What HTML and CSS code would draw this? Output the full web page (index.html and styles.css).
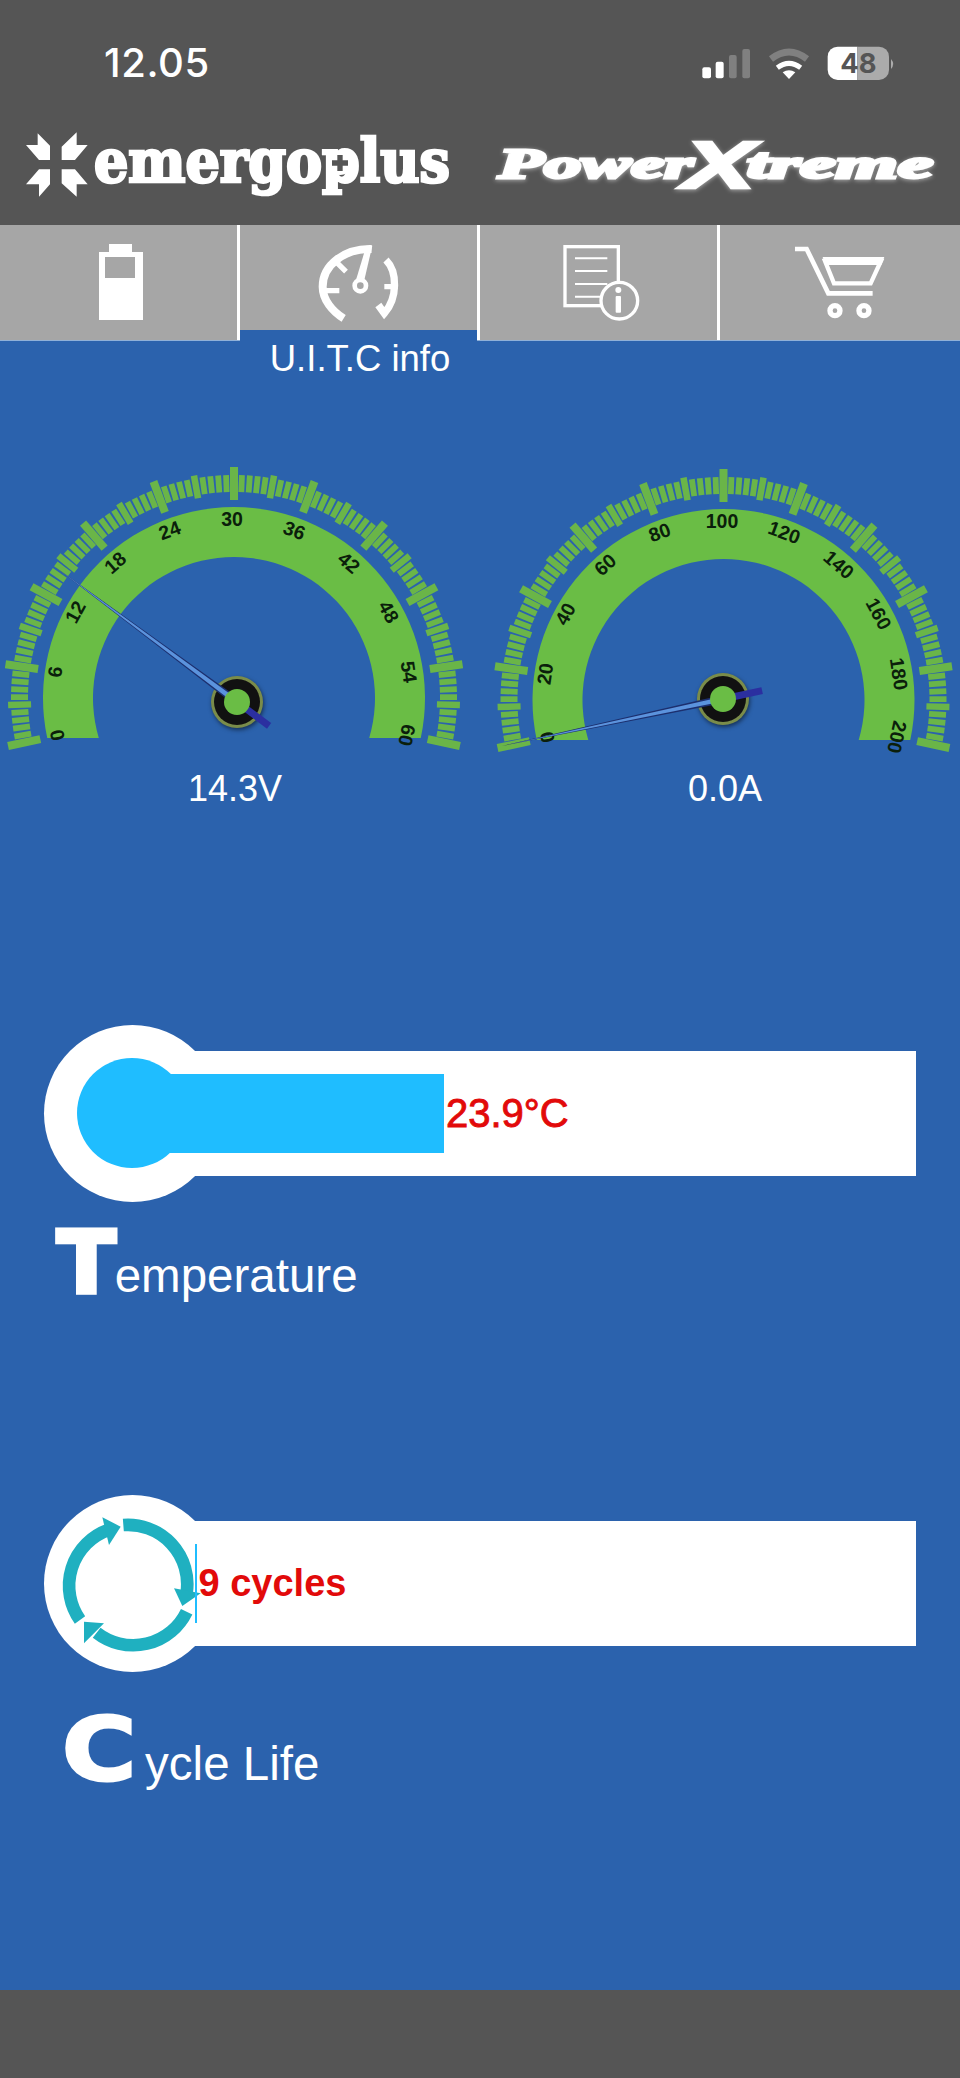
FILE: index.html
```html
<!DOCTYPE html>
<html lang="en">
<head>
    <meta charset="UTF-8">
    <meta name="viewport" content="width=device-width, initial-scale=1.0">
    <title>U.I.T.C info</title>
    <link rel="stylesheet" href="styles.css">
</head>
<body>
    <div class="app">
        <div class="top">
            <div class="status">
                <span class="time">12.05</span>
                <svg class="status-icons" viewBox="0 0 660 165">
                    <rect class="on" x="37" y="97" width="26" height="33" rx="6"/>
                    <rect class="on" x="77" y="80" width="24" height="50" rx="6"/>
                    <rect class="off" x="117" y="60" width="23" height="70" rx="6"/>
                    <rect class="off" x="157" y="42" width="23" height="88" rx="6"/>
                    <path class="wifi-off" d="M243 72 Q297 30 351 72"/>
                    <path class="wifi-on" d="M262 98 Q297 72 332 98"/>
                    <path class="on" d="M278 112 Q297 100 316 112 L297 132 Z"/>
                    <path class="on" d="M443 35 H502 V135 H443 A30 30 0 0 1 413 105 V65 A30 30 0 0 1 443 35 Z"/>
                    <path class="batt-empty" d="M502 35 H567 A30 30 0 0 1 597 65 V105 A30 30 0 0 1 567 135 H502 Z"/>
                    <path class="batt-empty" d="M603 72 Q616 87 603 102 Z"/>
                    <text class="batt-text" x="505" y="113" text-anchor="middle">48</text>
                </svg>
            </div>
            <div class="logos">
                <svg class="logo-emergo" viewBox="0 0 1365 240">
                    <polygon points="68,25 105,62 105,105 72,105 33,60 68,60"/>
                    <polygon points="185,22 185,60 218,60 180,105 140,105 140,65"/>
                    <polygon points="72,133 105,133 105,178 72,215 72,178 33,178"/>
                    <polygon points="140,133 180,133 218,178 185,178 185,215 140,175"/>
                    <text x="237" y="172">emergoplus</text>
                    <circle cx="975" cy="114" r="36"/>
                    <path class="logo-plus" d="M967 90 H983 V106 H999 V122 H983 V138 H967 V122 H951 V106 H967 Z"/>
                </svg>
                <svg class="logo-power" viewBox="0 0 1380 240">
                    <text class="power-word" x="40" y="158" textLength="585" lengthAdjust="spacingAndGlyphs">Power</text>
                    <text class="power-x" x="595" y="190" textLength="215" lengthAdjust="spacingAndGlyphs">X</text>
                    <text class="power-word" x="785" y="158" textLength="560" lengthAdjust="spacingAndGlyphs">treme</text>
                </svg>
            </div>
        </div>

        <div class="tabs">
            <div class="tab">
                <svg viewBox="0 225 237 115">
                    <path class="solid" d="M109 244 H132 V252 H143 V320 H99 V252 H109 Z M105 257 V278 H135 V257 Z" fill-rule="evenodd"/>
                </svg>
            </div>
            <div class="tab tab-active">
                <svg viewBox="240 225 237 115">
                    <g transform="translate(301 235) scale(.3333)">
                        <path class="line" stroke-width="24" d="M212 42 C130 40 65 90 65 155 C65 195 95 230 128 250"/>
                        <path class="solid" d="M165 135 L190 135 L214 32 L196 32 Z"/>
                        <path class="line" stroke-width="16" d="M110 85 L135 110 M65 167 H115 M250 155 H290"/>
                        <path class="line" stroke-width="22" d="M255 75 C290 110 290 190 250 235 L232 210"/>
                        <circle class="line" cx="178" cy="152" r="17" stroke-width="14"/>
                    </g>
                </svg>
                <div class="tab-label">U.I.T.C info</div>
            </div>
            <div class="tab">
                <svg viewBox="480 225 237 115">
                    <g transform="translate(550 235) scale(.3333)">
                        <rect class="line" x="45" y="35" width="160" height="177" stroke-width="10"/>
                        <path class="line" stroke-width="6" d="M75 70 H172 M75 108 H172 M75 147 H172 M75 185 H172"/>
                        <circle class="info-ring" cx="208" cy="197" r="55"/>
                        <circle class="solid" cx="205" cy="165" r="9"/>
                        <rect class="solid" x="197" y="183" width="16" height="50" rx="3"/>
                    </g>
                </svg>
            </div>
            <div class="tab">
                <svg viewBox="720 225 240 115">
                    <g transform="translate(550 235) scale(.3333)">
                        <path class="line" stroke-width="14" d="M735 42 H770 L835 175 H968"/>
                        <path class="line" stroke-width="13" d="M825 78 H993 L962 145 H852 Z"/>
                        <path class="solid" d="M818 66 H1003 L994 90 H826 Z"/>
                        <circle class="line" cx="855" cy="227" r="15" stroke-width="16"/>
                        <circle class="line" cx="942" cy="227" r="15" stroke-width="16"/>
                    </g>
                </svg>
            </div>
        </div>

        <div class="main">
            <div class="gauges">
                <div class="gauge gauge-left">
                    <svg class="gauge-dial" viewBox="0 460 480 308" data-cx="232" data-cy="698" data-band="234" data-hub="237,702" data-max="60" data-value="14.3"></svg>
                    <div class="gauge-value">14.3V</div>
                </div>
                <div class="gauge gauge-right">
                    <svg class="gauge-dial" viewBox="480 460 480 308" data-cx="722" data-cy="700" data-band="723.5" data-hub="723,699" data-max="200" data-value="0"></svg>
                    <div class="gauge-value">0.0A</div>
                </div>
            </div>

            <div class="meter meter-temp">
                <div class="meter-circle"><div class="bulb"></div></div>
                <div class="meter-bar">
                    <div class="meter-fill" style="width: 249px"></div>
                    <span class="meter-value">23.9°C</span>
                </div>
            </div>
            <div class="meter-label label-temp"><span class="big">T</span>emperature</div>

            <div class="meter meter-cycle">
                <div class="meter-circle">
                    <svg class="cycle-icon" viewBox="40 45 531 531">
                        <path class="cycle-arc" d="M148 420 A178 178 0 0 1 232 150"/>
                        <polygon class="cycle-head" points="270,140 215,112 235,195"/>
                        <path class="cycle-arc" d="M278 135 A178 178 0 0 1 468 338"/>
                        <polygon class="cycle-head" points="430,325 510,340 455,378"/>
                        <path class="cycle-arc" d="M468 395 A178 178 0 0 1 198 458"/>
                        <polygon class="cycle-head" points="160,490 160,425 220,430"/>
                    </svg>
                </div>
                <div class="meter-bar">
                    <div class="meter-fill" style="width: 1.5px"></div>
                    <span class="meter-value">9 cycles</span>
                </div>
            </div>
            <div class="meter-label label-cycle"><span class="big">C</span>ycle Life</div>
        </div>

        <div class="bottom"></div>
    </div>

    <script src="gauges.js"></script>
</body>
</html>
```

FILE: styles.css
```css
* {
    margin: 0;
    padding: 0;
    box-sizing: border-box;
}

body {
    font-family: "Liberation Sans", Arial, sans-serif;
    background-color: #2B62AD;
    color: #FFFFFF;
}

.app {
    width: 960px;
    height: 2078px;
    display: flex;
    flex-direction: column;
    overflow: hidden;
}

.top {
    background-color: #555555;
    height: 225px;
}

.status {
    height: 125px;
    display: flex;
    justify-content: space-between;
    align-items: center;
    padding: 0 50px 0 104px;
}

.time {
    font-family: Inter, "Liberation Sans", sans-serif;
    font-size: 40px;
    font-weight: 500;
    letter-spacing: 0.6px;
}

.status-icons {
    width: 220px;
    height: 55px;
}

.status-icons .on {
    fill: #FFFFFF;
}

.status-icons .off {
    fill: #808080;
}

.wifi-off,
.wifi-on {
    fill: none;
}

.wifi-off {
    stroke: #808080;
    stroke-width: 20;
}

.wifi-on {
    stroke: #FFFFFF;
    stroke-width: 15;
}

.batt-empty {
    fill: #ABABAB;
}

.batt-text {
    font-family: Inter, "Liberation Sans", sans-serif;
    font-size: 82px;
    font-weight: 700;
    fill: #555555;
}

.logos {
    display: flex;
    gap: 15px;
    padding-left: 15px;
}

.logo-emergo {
    width: 455px;
    height: 80px;
    fill: #FFFFFF;
}

.logo-emergo text {
    font-family: "DejaVu Serif Condensed", "DejaVu Serif", serif;
    font-size: 180px;
    font-weight: 700;
    font-stretch: condensed;
    stroke: #FFFFFF;
    stroke-width: 8;
}

.logo-plus {
    fill: #555555;
}

.logo-power {
    width: 460px;
    height: 80px;
    fill: #FFFFFF;
    filter: drop-shadow(0 1px 2px rgba(255, 255, 255, 0.5));
}

.power-word {
    font-family: "Liberation Serif", serif;
    font-size: 126px;
    font-weight: 700;
    font-style: italic;
    stroke: #FFFFFF;
    stroke-width: 9;
}

.power-x {
    font-size: 200px;
    font-weight: 700;
    font-style: italic;
    stroke: #FFFFFF;
    stroke-width: 8;
}

.tabs {
    height: 116px;
    display: flex;
    background-color: #A6A6A6;
    border-bottom: 1px solid #8FB0D8;
}

.tab {
    width: 240px;
    position: relative;
    border-right: 3px solid #FFFFFF;
}

.tab:last-child {
    border-right: none;
}

.tab svg {
    display: block;
    width: 100%;
    height: 115px;
}

.solid {
    fill: #FFFFFF;
}

.line {
    fill: none;
    stroke: #FFFFFF;
}

.info-ring {
    fill: #A6A6A6;
    stroke: #FFFFFF;
    stroke-width: 10;
}

.tab-label {
    position: absolute;
    top: 105px;
    left: 0;
    right: 0;
    height: 52px;
    padding: 8px 0 0 3px;
    background: linear-gradient(#2B62AD 0, #2B62AD 11px, transparent 11px);
    font-size: 36.5px;
    line-height: 42px;
    text-align: center;
}

.main {
    flex: 1;
    padding-top: 119px;
}

.gauges {
    display: flex;
}

.gauge {
    width: 480px;
}

.gauge-dial {
    display: block;
    width: 480px;
    height: 308px;
}

.gauge-value {
    font-size: 36px;
    line-height: 42px;
    text-align: center;
}

.gauge-left .gauge-value {
    padding-right: 10px;
}

.gauge-right .gauge-value {
    padding-left: 10px;
}

.gauge-band {
    fill: #6ABD45;
}

.gauge-tick {
    stroke: #6AB548;
}

.gauge-num {
    font-size: 19.5px;
    font-weight: 700;
    fill: #0B1F0B;
    text-anchor: middle;
    dominant-baseline: central;
}

.hub-edge {
    fill: #7A8C4A;
    filter: drop-shadow(1px 2px 2px rgba(0, 0, 0, 0.5));
}

.hub-ring {
    fill: #111111;
}

.hub-dot {
    fill: #6ABD45;
}

.needle-dark {
    fill: #1C2F6E;
}

.needle-light {
    fill: #5B93DD;
}

.needle-tail {
    stroke: #2B2FA0;
    stroke-width: 7;
}

.meter {
    position: relative;
    height: 177px;
    margin: 0 44px;
    display: flex;
    align-items: center;
}

.meter-temp {
    margin-top: 215px;
}

.meter-cycle {
    margin-top: 187px;
}

.meter-circle {
    position: absolute;
    left: 0;
    top: 0;
    width: 177px;
    height: 177px;
    border-radius: 50%;
    background-color: #FFFFFF;
}

.meter-bar {
    flex: 1;
    height: 125px;
    margin-left: 88px;
    padding-left: 63px;
    display: flex;
    align-items: center;
    background-color: #FFFFFF;
}

.meter-fill {
    position: relative;
    height: 79px;
    background-color: #1FBDFF;
}

.meter-value {
    position: relative;
    margin-left: 2px;
    font-size: 38px;
    font-weight: 700;
    color: #E20A0A;
}

.meter-temp .meter-value {
    font-size: 40px;
    font-weight: 400;
    -webkit-text-stroke: 0.9px #E20A0A;
}

.bulb {
    position: absolute;
    left: 33px;
    top: 33px;
    width: 110px;
    height: 110px;
    border-radius: 50%;
    background-color: #1FBDFF;
}

.bulb::after {
    content: "";
    position: absolute;
    left: 55px;
    top: 16px;
    width: 64px;
    height: 79px;
    background-color: #1FBDFF;
}

.cycle-icon {
    display: block;
    width: 177px;
    height: 177px;
    overflow: visible;
}

.cycle-arc {
    fill: none;
    stroke: #1FB0C0;
    stroke-width: 38;
}

.cycle-head {
    fill: #1FB0C0;
}

.meter-label {
    font-size: 47.5px;
    line-height: 92px;
    height: 92px;
}

.meter-label .big {
    display: inline-block;
    font-family: "DejaVu Sans", sans-serif;
    font-size: 86px;
    font-weight: 700;
    line-height: 92px;
    -webkit-text-stroke: 4.5px #FFFFFF;
    transform-origin: left bottom;
}

.label-temp {
    margin: 14px 0 0 57px;
}

.label-temp .big {
    margin-right: -1px;
}

.label-cycle {
    margin: 32px 0 0 61.5px;
}

.label-cycle .big {
    margin-right: 19px;
    font-size: 88px;
    -webkit-text-stroke: 3px #FFFFFF;
    transform: scaleX(1.15);
}

.bottom {
    height: 88px;
    background-color: #555555;
}
```

FILE: gauges.js
```js
// Draws the two dials from the data-* values on each svg
const SVG_NS = 'http://www.w3.org/2000/svg';
const START_ANGLE = -12;
const SWEEP = 204;

function add(parent, tag, attrs) {
    const el = document.createElementNS(SVG_NS, tag);
    for (const key in attrs) {
        el.setAttribute(key, attrs[key]);
    }
    parent.appendChild(el);
    return el;
}

// Point on a circle, angle 0 = left, going clockwise over the top
function polar(cx, cy, r, deg) {
    const a = deg * Math.PI / 180;
    return [cx - r * Math.cos(a), cy - r * Math.sin(a)];
}

function drawBand(svg, cx, cy) {
    const R = 191, r = 141, drop = 40;
    const outer = Math.sqrt(R * R - drop * drop);
    const inner = Math.sqrt(r * r - drop * drop);
    const y = cy + drop;
    add(svg, 'path', {
        class: 'gauge-band',
        d: `M${cx - outer} ${y} A${R} ${R} 0 1 1 ${cx + outer} ${y} L${cx + inner} ${y} A${r} ${r} 0 1 0 ${cx - inner} ${y} Z`
    });
}

function drawTicks(svg, cx, cy) {
    for (let i = 0; i <= 100; i++) {
        const deg = START_ANGLE + SWEEP * i / 100;
        let from = 206, to = 223, width = 5.8;
        if (i % 10 === 0) {
            from = 198; to = 231; width = 8;
        } else if (i % 5 === 0) {
            from = 203; to = 226; width = 6.5;
        }
        const a = polar(cx, cy, from, deg);
        const b = polar(cx, cy, to, deg);
        add(svg, 'line', {
            class: 'gauge-tick', x1: a[0], y1: a[1], x2: b[0], y2: b[1], 'stroke-width': width
        });
    }
}

function drawNumbers(svg, cx, cy, max) {
    for (let i = 0; i <= 10; i++) {
        const deg = START_ANGLE + SWEEP * i / 10;
        const p = polar(cx, cy, 179, deg);
        const text = add(svg, 'text', {
            class: 'gauge-num', x: p[0], y: p[1],
            transform: `rotate(${deg - 90} ${p[0]} ${p[1]})`
        });
        text.textContent = max * i / 10;
    }
}

function drawHub(svg, hx, hy, max, value) {
    const deg = START_ANGLE + SWEEP * value / max;
    const tip = polar(hx, hy, 226, deg);
    const tail = polar(hx, hy, -40, deg);
    const side = polar(0, 0, 1, deg + 90);
    const wedge = (w) => [
        [hx + side[0] * w, hy + side[1] * w],
        [hx - side[0] * w, hy - side[1] * w],
        tip
    ].map((p) => p.join(',')).join(' ');

    add(svg, 'circle', { class: 'hub-edge', cx: hx, cy: hy, r: 26 });
    add(svg, 'circle', { class: 'hub-ring', cx: hx, cy: hy, r: 23 });
    add(svg, 'polygon', { class: 'needle-dark', points: wedge(4) });
    add(svg, 'polygon', { class: 'needle-light', points: wedge(2.4) });
    add(svg, 'line', { class: 'needle-tail', x1: hx, y1: hy, x2: tail[0], y2: tail[1] });
    add(svg, 'circle', { class: 'hub-dot', cx: hx, cy: hy, r: 13 });
}

document.querySelectorAll('.gauge-dial').forEach(function(svg) {
    const d = svg.dataset;
    const cx = Number(d.cx), cy = Number(d.cy);
    const band = Number(d.band);
    const hub = d.hub.split(',').map(Number);
    drawBand(svg, band, cy);
    drawTicks(svg, band, cy);
    drawNumbers(svg, cx, cy, Number(d.max));
    drawHub(svg, hub[0], hub[1], Number(d.max), Number(d.value));
});
```
